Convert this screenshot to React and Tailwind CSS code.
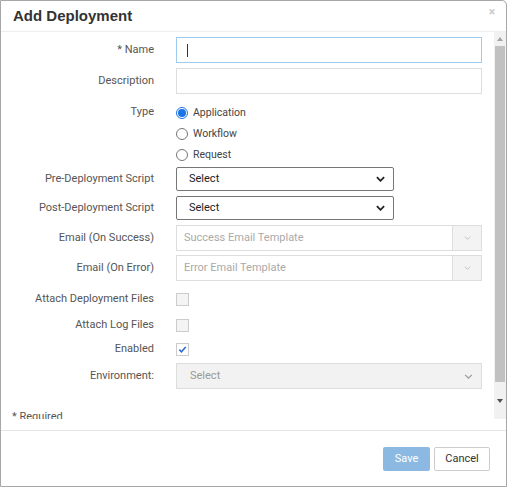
import React from "react";

const Label = ({ children }) => (
  <div className="w-[154px] shrink-0 pr-[1px] text-right text-[11px] text-[#555]">{children}</div>
);

const Chevron = ({ className }) => (
  <svg viewBox="0 0 10 6" className={className} fill="none" stroke="currentColor">
    <path d="M1 1l4 4 4-4" />
  </svg>
);

const Radio = ({ checked, label }) => (
  <div className="flex h-[21px] items-center">
    {checked ? (
      <span className="flex h-[12px] w-[12px] items-center justify-center rounded-full border border-[#1a73e8] bg-white">
        <span className="h-[8px] w-[8px] rounded-full bg-[#1a73e8]" />
      </span>
    ) : (
      <span className="h-[12px] w-[12px] rounded-full border border-[#767676] bg-white" />
    )}
    <span className="ml-[5px] text-[10.5px] text-[#444]">{label}</span>
  </div>
);

const Check = ({ checked }) => (
  <span
    className={
      "flex h-[13px] w-[13px] items-center justify-center border border-[#ccc] " +
      (checked ? "bg-white" : "bg-[#f4f4f4]")
    }
  >
    {checked && (
      <svg viewBox="0 0 10 10" className="h-[9px] w-[9px]" fill="none" stroke="#2f6fd6" strokeWidth="1.8">
        <path d="M1.5 5.2l2.3 2.3L8.6 2.3" />
      </svg>
    )}
  </span>
);

const NativeSelect = () => (
  <div className="flex h-[24px] w-[218px] items-center justify-between rounded-[2px] border border-[#767676] bg-white pl-[12px] pr-[8px] text-[11px] text-[#222]">
    <span>Select</span>
    <Chevron className="h-[6px] w-[9px] stroke-[2px] text-[#222]" />
  </div>
);

const EmailSelect = ({ placeholder }) => (
  <div className="flex h-[26px] w-[306px] border border-[#ddd] bg-white text-[11px]">
    <div className="flex flex-1 items-center pl-[7px] text-[#aaa]">{placeholder}</div>
    <div className="flex w-[29px] items-center justify-center border-l border-[#ddd] bg-[#f3f3f3]">
      <Chevron className="h-[4px] w-[7px] text-[#aaa]" />
    </div>
  </div>
);

export default function App() {
  return (
    <div className="h-[488px] w-[509px] bg-white font-['Roboto',sans-serif]">
      <div className="flex h-[487px] w-[507px] flex-col rounded-tr-[5px] border border-[#a7a7a7] bg-white">
        {/* Header */}
        <div className="flex h-[31px] shrink-0 items-center justify-between border-b border-[#eee] pl-[12px] pr-[11px]">
          <h1 className="font-['Liberation_Sans',sans-serif] text-[15px] font-bold text-[#333]">Add Deployment</h1>
          <span className="-mt-[8px] text-[12px] font-bold leading-none text-[#ccc]">×</span>
        </div>

        {/* Body */}
        <div className="flex h-[387px] shrink-0">
          <div className="flex flex-1 flex-col overflow-hidden pt-[5px]">
            <div className="flex items-center">
              <Label>* Name</Label>
              <div className="ml-[21px] flex h-[26px] w-[306px] items-center border border-[#9ecbee] bg-white pl-[10px]">
                <span className="h-[13px] w-[1px] bg-[#333]" />
              </div>
            </div>

            <div className="mt-[5px] flex items-center">
              <Label>Description</Label>
              <div className="ml-[21px] h-[26px] w-[306px] border border-[#ddd] bg-white" />
            </div>

            <div className="mt-[8px] flex items-start">
              <div className="flex h-[21px] items-center">
                <Label>Type</Label>
              </div>
              <div className="ml-[21px] flex flex-col">
                <Radio checked label="Application" />
                <Radio label="Workflow" />
                <Radio label="Request" />
              </div>
            </div>

            <div className="mt-[2px] flex items-center">
              <Label>Pre-Deployment Script</Label>
              <div className="ml-[21px]">
                <NativeSelect />
              </div>
            </div>

            <div className="mt-[5px] flex items-center">
              <Label>Post-Deployment Script</Label>
              <div className="ml-[21px]">
                <NativeSelect />
              </div>
            </div>

            <div className="mt-[5px] flex items-center">
              <Label>Email (On Success)</Label>
              <div className="ml-[21px]">
                <EmailSelect placeholder="Success Email Template" />
              </div>
            </div>

            <div className="mt-[4px] flex items-center">
              <Label>Email (On Error)</Label>
              <div className="ml-[21px]">
                <EmailSelect placeholder="Error Email Template" />
              </div>
            </div>

            <div className="mt-[12px] flex h-[13px] items-center">
              <Label>Attach Deployment Files</Label>
              <div className="ml-[21px]">
                <Check />
              </div>
            </div>

            <div className="mt-[13px] flex h-[13px] items-center">
              <Label>Attach Log Files</Label>
              <div className="ml-[21px]">
                <Check />
              </div>
            </div>

            <div className="mt-[11px] flex h-[13px] items-center">
              <Label>Enabled</Label>
              <div className="ml-[21px]">
                <Check checked />
              </div>
            </div>

            <div className="mt-[7px] flex items-center">
              <Label>Environment:</Label>
              <div className="ml-[21px] flex h-[26px] w-[306px] items-center justify-between border border-[#ddd] bg-[#f2f2f2] pl-[13px] pr-[8px] text-[11px] text-[#999]">
                <span>Select</span>
                <Chevron className="h-[5px] w-[9px] stroke-[1.4px] text-[#999]" />
              </div>
            </div>

            <div className="mt-[20px] pl-[11px] text-[11px] text-[#555]">* Required</div>
          </div>

          {/* Scrollbar */}
          <div className="flex w-[12px] shrink-0 flex-col bg-[#f1f1f1]">
            <div className="flex h-[14px] items-center justify-center">
              <span className="h-0 w-0 border-x-[3.5px] border-b-[4px] border-x-transparent border-b-[#a3a3a3]" />
            </div>
            <div className="mx-[1px] h-[336px] bg-[#c1c1c1]" />
            <div className="flex flex-1 items-center justify-center">
              <span className="h-0 w-0 border-x-[3.5px] border-t-[4px] border-x-transparent border-t-[#505050]" />
            </div>
          </div>
        </div>

        {/* Footer */}
        <div className="mt-[11px] flex flex-1 items-center justify-end gap-[4px] border-t border-[#e5e5e5] pr-[16px] pt-[1px]">
          <button className="h-[24px] w-[47px] rounded-[2px] bg-[#8cb9e2] text-[11px] text-white">Save</button>
          <button className="h-[24px] w-[56px] rounded-[2px] border border-[#ccc] bg-white text-[11px] text-[#333]">
            Cancel
          </button>
        </div>
      </div>
    </div>
  );
}
